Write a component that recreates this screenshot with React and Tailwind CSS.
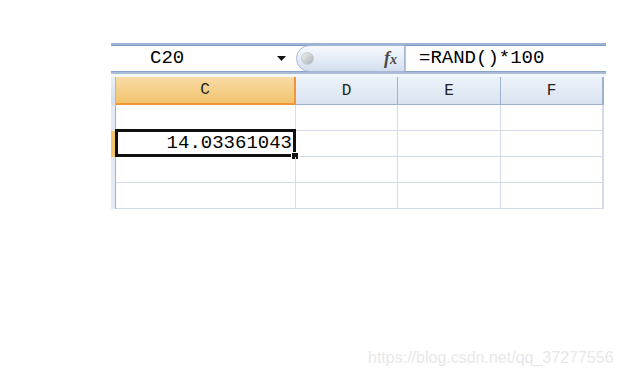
export default function App() {
  const mono = { fontFamily: '"Liberation Mono", "DejaVu Sans Mono", monospace' };
  const rows = [0, 1, 2, 3];
  return (
    <div className="relative w-[620px] h-[375px] bg-white overflow-hidden">
      <div className="pl-[111px] pt-[43px]">
        <div className="w-[495px]">
          {/* top bar */}
          <div className="h-[3px] bg-[#9fb5d6] border-b border-[#7f9bc4]" />
          {/* formula bar */}
          <div className="flex h-[25px] bg-white">
            <div className="w-[185px] flex items-center text-[19px] text-black" style={mono}>
              <span className="pl-[39px] leading-none">C20</span>
              <svg className="ml-auto mr-[10px]" width="9" height="5" viewBox="0 0 9 5">
                <path d="M0 0 L9 0 L4.5 5 Z" fill="#111" />
              </svg>
            </div>
            <div className="relative w-[109px] -mt-[1px] h-[27px] rounded-l-full border border-[#a5b7d3] bg-gradient-to-b from-[#f6f9fd] via-[#e6edf7] to-[#d3deef] flex items-center">
              <div className="ml-[4px] w-[13px] h-[13px] rounded-full bg-gradient-to-br from-[#f2f2f2] to-[#a9adb3] border border-[#c5cbd3]" />
              <span className="ml-auto mr-[7px] text-[18px] italic font-bold text-[#4a4a4a]" style={{ fontFamily: '"Liberation Serif", serif' }}>
                f<span className="text-[14px]">x</span>
              </span>
            </div>
            <div className="flex-1 border-l border-[#b9c7dc] flex items-center pl-[13px] text-[19px] text-black" style={mono}>
              <span className="leading-none">=RAND()*100</span>
            </div>
          </div>
          <div className="h-[3px] bg-[#a9bcd8] border-t border-[#8aa3c8]" />
          <div className="h-[3px] bg-[#f3f6fa]" />
          {/* column header */}
          <div className="flex h-[28px] text-[16px] text-[#222]" style={mono}>
            <div className="w-[5px] bg-gradient-to-b from-[#eaf0f8] to-[#d4deec] border-r border-[#a9b8cf]" />
            <div className="w-[180px] flex items-center justify-center bg-gradient-to-b from-[#f9dba6] to-[#f1c46c] border-r-2 border-b-2 border-[#f29536]">C</div>
            <div className="w-[102px] flex items-center justify-center bg-gradient-to-b from-[#eef3fa] to-[#d9e3f1] border-r border-b border-[#9eb1cf]">D</div>
            <div className="w-[103px] flex items-center justify-center bg-gradient-to-b from-[#eef3fa] to-[#d9e3f1] border-r border-b border-[#9eb1cf]">E</div>
            <div className="w-[103px] flex items-center justify-center bg-gradient-to-b from-[#eef3fa] to-[#d9e3f1] border-r-2 border-b border-[#9eb1cf]">F</div>
          </div>
          {/* grid rows */}
          {rows.map((r) => (
            <div key={r} className="flex h-[26px]">
              <div className={`w-[5px] border-r border-[#9fb3d2] ${r === 1 ? 'bg-[#f6c46c]' : 'bg-[#e4ebf5]'}`} />
              <div className="relative w-[180px] border-r border-b border-[#d3dbe8] flex items-center justify-end">
                {r === 1 && (
                  <>
                    <div className="absolute -top-[2px] -left-[1px] w-[181px] h-[28px] border-[3px] border-[#111]" />
                    <div className="absolute -bottom-[4px] -right-[4px] w-[8px] h-[8px] bg-[#111] border border-white" />
                    <span className="pr-[3px] text-[19px] leading-none text-black" style={mono}>14.03361043</span>
                  </>
                )}
              </div>
              <div className="w-[102px] border-r border-b border-[#d3dbe8]" />
              <div className="w-[103px] border-r border-b border-[#d3dbe8]" />
              <div className="w-[103px] border-r-2 border-b border-[#d3dbe8]" />
            </div>
          ))}
        </div>
      </div>
      <div
        className="absolute left-[368px] top-[346px] text-[16px] text-[#e8e8e8]"
        style={{ fontFamily: '"Liberation Sans", Arial, sans-serif' }}
      >
        https://blog.csdn.net/qq_37277556
      </div>
    </div>
  );
}
